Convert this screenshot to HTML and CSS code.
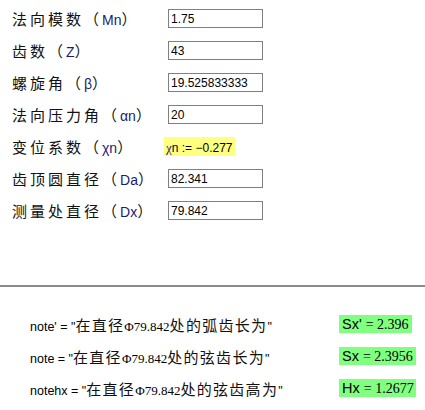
FILE: index.html
```html
<!DOCTYPE html>
<html lang="zh-CN">
<head>
    <meta charset="UTF-8">
    <title>斜齿轮 跨棒距/弦齿厚</title>
    <link rel="stylesheet" href="styles.css">
</head>
<body>
    <div class="params">
        <div class="row">
            <div class="label">法向模数（<span class="sym">Mn</span>）</div>
            <input class="field" type="text" value="1.75">
        </div>
        <div class="row">
            <div class="label">齿数（<span class="sym">Z</span>）</div>
            <input class="field" type="text" value="43">
        </div>
        <div class="row">
            <div class="label">螺旋角（<span class="sym">β</span>）</div>
            <input class="field" type="text" value="19.525833333">
        </div>
        <div class="row">
            <div class="label">法向压力角（<span class="sym">αn</span>）</div>
            <input class="field" type="text" value="20">
        </div>
        <div class="row">
            <div class="label">变位系数（<span class="sym">χn</span>）</div>
            <div class="calc"><span class="greek">χ</span>n := −0.277</div>
        </div>
        <div class="row">
            <div class="label">齿顶圆直径（<span class="sym">Da</span>）</div>
            <input class="field" type="text" value="82.341">
        </div>
        <div class="row">
            <div class="label">测量处直径（<span class="sym">Dx</span>）</div>
            <input class="field" type="text" value="79.842">
        </div>
    </div>

    <div class="divider"></div>

    <div class="notes">
        <div class="note-row">
            <div class="note">note' = "<span class="cn">在直径</span><span class="num">Φ79.842</span><span class="cn">处的弧齿长为</span>"</div>
            <div class="result">Sx' <span class="num">= 2.396</span></div>
        </div>
        <div class="note-row">
            <div class="note">note = "<span class="cn">在直径</span><span class="num">Φ79.842</span><span class="cn">处的弦齿长为</span>"</div>
            <div class="result wide">Sx <span class="num">= 2.3956</span></div>
        </div>
        <div class="note-row">
            <div class="note">notehx = "<span class="cn">在直径</span><span class="num">Φ79.842</span><span class="cn">处的弦齿高为</span>"</div>
            <div class="result wide">Hx <span class="num">= 1.2677</span></div>
        </div>
    </div>
</body>
</html>
```

FILE: styles.css
```css
body {
    margin: 0;
    background-color: #fff;
    color: #000;
    font-family: "Liberation Sans", "Noto Sans CJK SC", sans-serif;
}

/* top input block */
.params {
    display: flex;
    flex-direction: column;
    gap: 13px;
    padding-top: 9px;
}
.row {
    display: flex;
    align-items: center;
    height: 19px;
}
.label {
    width: 156px;
    padding-left: 12px;
    font-family: "Noto Sans CJK SC", sans-serif;
    font-size: 15px;
    letter-spacing: 3px;
    white-space: nowrap;
    color: #111;
}
.label .sym {
    font-family: "Liberation Sans", sans-serif;
    font-size: 14px;
    letter-spacing: 0;
    color: #1a1a78;
}
.field {
    box-sizing: border-box;
    width: 95px;
    height: 19px;
    margin: 0;
    padding: 0 2px;
    border: 1px solid #808080;
    font-family: "Liberation Sans", sans-serif;
    font-size: 12px;
    color: #000;
    background: #fff;
    outline: none;
}
.calc {
    margin-left: -4px;
    height: 19px;
    padding: 0 2px;
    background-color: #ffff80;
    font-size: 12px;
    line-height: 21px;
}
.calc .greek {
    font-family: "Liberation Serif", serif;
    font-size: 13px;
    color: #1a1a78;
}

.divider {
    margin-top: 65px;
    height: 2px;
    background-color: #8c8c8c;
}

/* notes block */
.notes {
    display: flex;
    flex-direction: column;
    gap: 14px;
    padding-top: 28px;
}
.note-row {
    display: flex;
    align-items: center;
    height: 18px;
}
.note {
    width: 309px;
    padding-left: 30px;
    font-size: 12.5px;
    white-space: nowrap;
}
.note .cn {
    font-family: "Noto Sans CJK SC", sans-serif;
    font-size: 15px;
    letter-spacing: 1.3px;
    color: #111;
}
.num {
    font-family: "Liberation Serif", serif;
    font-size: 13px;
}
.result {
    box-sizing: border-box;
    width: 73px;
    height: 18px;
    padding-left: 3px;
    background-color: #80ff80;
    font-size: 14.5px;
    line-height: 19px;
    white-space: nowrap;
}
.result .num {
    font-size: 14px;
}
.result.wide {
    width: 77px;
}
```
